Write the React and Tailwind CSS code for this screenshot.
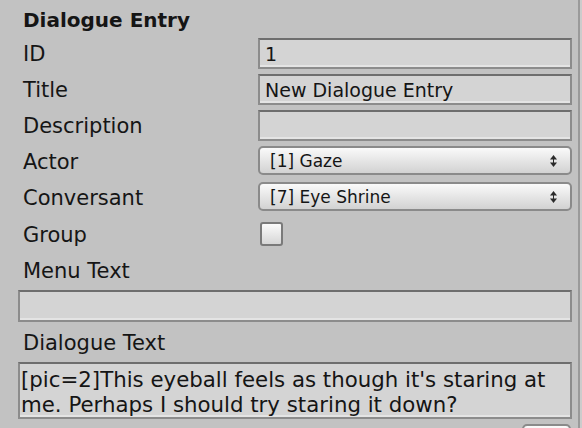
import React from "react";

const font = { fontFamily: '"DejaVu Sans", "Liberation Sans", sans-serif' };

function Label({ children }) {
  return (
    <div className="w-[235px] shrink-0 pt-[2px] text-[21px] leading-none text-[#151515]">
      {children}
    </div>
  );
}

function Field({ value, className = "" }) {
  return (
    <div
      className={`flex-1 h-[31px] flex items-center border-2 border-[#8c8c8c] border-t-[#6e6e6e] bg-[#d4d4d4] shadow-[inset_0_-2px_0_#e4e4e4] pl-[5px] pt-[1px] text-[19px] leading-none text-[#151515] ${className}`}
    >
      {value}
    </div>
  );
}

function Arrows() {
  return (
    <svg width="9" height="14" viewBox="0 0 9 14" className="shrink-0">
      <path d="M4.5 1 L8 5.5 L1 5.5 Z" fill="#2a2a2a" />
      <path d="M4.5 13 L8 8.5 L1 8.5 Z" fill="#2a2a2a" />
      <rect x="4" y="5" width="1" height="4" fill="#2a2a2a" />
    </svg>
  );
}

function Dropdown({ value }) {
  return (
    <div className="flex-1 h-[29px] flex items-center justify-between rounded-[5px] border-2 border-[#8a8a8a] bg-gradient-to-b from-[#fafafa] to-[#d2d2d2] pl-[10px] pr-[12px] text-[17px] leading-none text-[#151515]">
      <span className="pt-[1px]">{value}</span>
      <Arrows />
    </div>
  );
}

function Row({ label, children }) {
  return (
    <div className="flex items-center h-[31px] mb-[5px]">
      <Label>{label}</Label>
      {children}
    </div>
  );
}

export default function App() {
  return (
    <div className="w-[582px] h-[428px] overflow-hidden bg-[#c2c2c2] flex items-start" style={font}>
      <div className="w-[578px] shrink-0 pl-[23px] pr-[6px]">
        <div className="h-[38px] flex items-center pt-[1px] text-[20px] font-bold leading-none text-[#151515]">
          Dialogue Entry
        </div>
        <Row label="ID">
          <Field value="1" />
        </Row>
        <Row label="Title">
          <Field value="New Dialogue Entry" />
        </Row>
        <Row label="Description">
          <Field value="" />
        </Row>
        <Row label="Actor">
          <div className="flex-1 flex self-start">
            <Dropdown value="[1] Gaze" />
          </div>
        </Row>
        <Row label="Conversant">
          <div className="flex-1 flex self-start">
            <Dropdown value="[7] Eye Shrine" />
          </div>
        </Row>
        <div className="flex items-center h-[32px]">
          <Label>Group</Label>
          <div className="ml-[2px] w-[23px] h-[24px] rounded-[3px] border-2 border-[#7a7a7a] bg-gradient-to-b from-[#fbfbfb] to-[#d6d6d6]" />
        </div>
        <div className="h-[40px] flex items-center pt-[2px] text-[21px] leading-none text-[#151515]">
          Menu Text
        </div>
        <div className="-ml-[5px] flex">
          <Field value="" className="!h-[32px]" />
        </div>
        <div className="h-[40px] flex items-center pt-[2px] text-[21px] leading-none text-[#151515]">
          Dialogue Text
        </div>
        <div className="-ml-[5px] h-[57px] border-2 border-[#8c8c8c] border-t-[#6e6e6e] bg-[#d4d4d4] shadow-[inset_0_-2px_0_#e4e4e4] pl-[1px] pt-[3px] text-[21.3px] leading-[25px] text-[#151515] whitespace-nowrap overflow-hidden">
          <div>[pic=2]This eyeball feels as though it's staring at</div>
          <div>me. Perhaps I should try staring it down?</div>
        </div>
        <div className="flex justify-end mt-[5px]">
          <div className="mr-[1px] w-[49px] h-[20px] rounded-t-[5px] border-2 border-[#8a8a8a] bg-gradient-to-b from-[#fafafa] to-[#e0e0e0]" />
        </div>
      </div>
      <div className="w-[2px] h-full shrink-0 bg-[#9a9a9a]" />
      <div className="w-[2px] h-full shrink-0 bg-[#cccccc]" />
    </div>
  );
}
